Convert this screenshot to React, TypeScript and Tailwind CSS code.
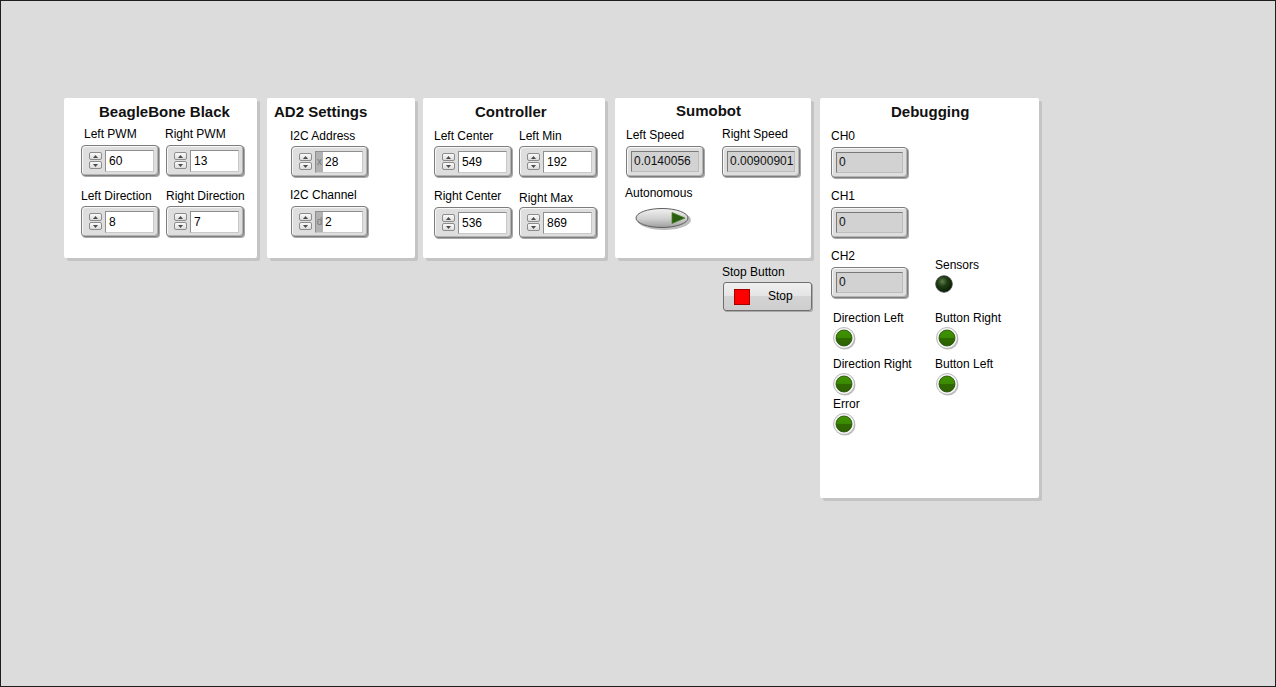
import React from 'react';

// LabVIEW-style front panel: five raised decoration boxes with numeric controls, indicators and LEDs

function Panel({ className, children }: { className: string; children: React.ReactNode }) {
  return (
    <div className={`flex-none bg-white rounded-[2px] shadow-[3px_3px_0_#c4c4c4] ${className}`}>{children}</div>
  );
}

function Title({ className, children }: { className: string; children: React.ReactNode }) {
  return (
    <div className={`text-[15px] leading-[18px] font-bold text-[#111] whitespace-nowrap ${className}`}>{children}</div>
  );
}

function Label({ className = '', children }: { className?: string; children: React.ReactNode }) {
  return <div className={`text-[12px] leading-[15px] whitespace-nowrap ${className}`}>{children}</div>;
}

function Field({
  label,
  labelClass = '',
  bodyClass = '',
  children,
}: {
  label: string;
  labelClass?: string;
  bodyClass?: string;
  children: React.ReactNode;
}) {
  return (
    <div className="flex flex-col items-start">
      <Label className={labelClass}>{label}</Label>
      <div className={bodyClass}>{children}</div>
    </div>
  );
}

function ArrowBtn({ up }: { up?: boolean }) {
  return (
    <div className="w-[13px] h-[8px] rounded-[2px] border border-[#8c8c8c] bg-[linear-gradient(#fafafa,#dcdcdc)] flex items-center justify-center">
      <svg width="5" height="3" viewBox="0 0 5 3">
        {up ? <polygon points="0,3 5,3 2.5,0" fill="#4a4a4a" /> : <polygon points="0,0 5,0 2.5,3" fill="#4a4a4a" />}
      </svg>
    </div>
  );
}

function Numeric({ value, radix, className = 'w-[78px]' }: { value: string; radix?: string; className?: string }) {
  return (
    <div
      className={`flex items-center h-[31px] rounded-[4px] border border-[#7d7d7d] bg-[#dedede] shadow-[inset_1px_1px_0_#f7f7f7,inset_-1px_-1px_0_#b3b3b3,1px_1px_0_#a8a8a8] pl-[7px] pr-[4px] ${className}`}
    >
      <div className="flex flex-col gap-[1px] flex-none">
        <ArrowBtn up />
        <ArrowBtn />
      </div>
      <div className="ml-[3px] flex-1 h-[22px] flex items-stretch bg-white border border-[#8f8f8f] border-r-[#c9c9c9] border-b-[#c9c9c9] overflow-hidden">
        {radix && (
          <span className="w-[7px] flex-none bg-[#b2b2b2] text-[#7a7a7a] text-[10px] leading-[20px] text-center">
            {radix}
          </span>
        )}
        <span className={`${radix ? 'pl-[2px]' : 'pl-[3px]'} text-[12px] leading-[20px]`}>{value}</span>
      </div>
    </div>
  );
}

function Indicator({ value, className = 'w-[78px]' }: { value: string; className?: string }) {
  return (
    <div
      className={`h-[31px] rounded-[4px] border border-[#7d7d7d] bg-[#dedede] shadow-[inset_1px_1px_0_#f7f7f7,inset_-1px_-1px_0_#b3b3b3,1px_1px_0_#a8a8a8] p-[4px] ${className}`}
    >
      <div className="h-full bg-[#d2d2d2] border border-[#7a7a7a] border-r-[#bcbcbc] border-b-[#bcbcbc] pl-[2px] text-[12px] leading-[19px] text-[#111] whitespace-nowrap overflow-hidden">
        {value}
      </div>
    </div>
  );
}

function Led() {
  return (
    <svg width="24" height="24" viewBox="0 0 24 24" className="block">
      <defs>
        <linearGradient id="ledOn" x1="0" y1="0" x2="0" y2="1">
          <stop offset="0" stopColor="#3f9400" />
          <stop offset="0.5" stopColor="#3a8a00" />
          <stop offset="0.5" stopColor="#2f6900" />
          <stop offset="1" stopColor="#2c6200" />
        </linearGradient>
      </defs>
      <circle cx="12" cy="12" r="10.5" fill="#c2c2c2" />
      <circle cx="11" cy="11" r="10.5" fill="#f5f5f5" stroke="#a9a9a9" strokeWidth="0.8" />
      <circle cx="11" cy="11" r="8" fill="url(#ledOn)" stroke="#234d05" strokeWidth="0.8" />
    </svg>
  );
}

function LedOff() {
  return (
    <svg width="18" height="18" viewBox="0 0 18 18" className="block">
      <defs>
        <radialGradient id="ledOff" cx="0.4" cy="0.35" r="0.65">
          <stop offset="0" stopColor="#5f7d4d" />
          <stop offset="0.45" stopColor="#1f3e14" />
          <stop offset="1" stopColor="#0b1c05" />
        </radialGradient>
      </defs>
      <circle cx="9" cy="9" r="8.3" fill="url(#ledOff)" stroke="#3b3b3b" strokeWidth="0.8" />
    </svg>
  );
}

function Toggle() {
  return (
    <svg width="58" height="24" viewBox="0 0 58 24" className="block">
      <defs>
        <linearGradient id="tgl" x1="0" y1="0" x2="0" y2="1">
          <stop offset="0" stopColor="#f2f2f2" />
          <stop offset="0.55" stopColor="#cfcfcf" />
          <stop offset="1" stopColor="#9e9e9e" />
        </linearGradient>
      </defs>
      <ellipse cx="29" cy="13" rx="27" ry="10" fill="#bdbdbd" />
      <ellipse cx="27" cy="11" rx="26" ry="9.5" fill="url(#tgl)" stroke="#5f5f5f" strokeWidth="1" />
      <polygon points="37,5.5 50,11 37,16.5" fill="#2a5c12" stroke="#4a8428" strokeWidth="0.8" />
    </svg>
  );
}

function StopButton() {
  return (
    <div className="w-[89px] h-[29px] rounded-[3px] border border-[#6f6f6f] bg-[linear-gradient(#f0f0f0,#e4e4e4_50%,#d4d4d4_50%,#cecece)] shadow-[1px_1px_0_#a8a8a8] flex items-center pl-[10px]">
      <div className="w-[16px] h-[16px] bg-[#ff0000] border border-[#a30000]" />
      <span className="ml-[18px] text-[12px] leading-[15px]">Stop</span>
    </div>
  );
}

export default function App() {
  return (
    <div className="w-[1276px] h-[687px] overflow-hidden border border-[#1e1e1e] bg-[#dcdcdc] text-black font-['Liberation_Sans',Arial,sans-serif]">
      <div className="flex items-start pt-[97px] pl-[63px]">
        {/* BeagleBone Black */}
        <Panel className="w-[193px] h-[160px] pt-[5px]">
          <Title className="ml-[35px]">BeagleBone Black</Title>
          <div className="mt-[6px] ml-[17px] flex gap-[7px]">
            <Field label="Left PWM" labelClass="ml-[3px]" bodyClass="mt-[3px]">
              <Numeric value="60" />
            </Field>
            <Field label="Right PWM" labelClass="ml-[-1px]" bodyClass="mt-[3px]">
              <Numeric value="13" />
            </Field>
          </div>
          <div className="mt-[13px] ml-[17px] flex gap-[7px]">
            <Field label="Left Direction" bodyClass="mt-[2px]">
              <Numeric value="8" />
            </Field>
            <Field label="Right Direction" bodyClass="mt-[2px]">
              <Numeric value="7" />
            </Field>
          </div>
        </Panel>

        {/* AD2 Settings */}
        <Panel className="ml-[10px] w-[148px] h-[160px] pt-[5px]">
          <Title className="ml-[7px]">AD2 Settings</Title>
          <div className="ml-[24px] flex flex-col">
            <Field label="I2C Address" labelClass="mt-[8px] ml-[-1px]" bodyClass="mt-[2px]">
              <Numeric value="28" radix="x" className="w-[77px]" />
            </Field>
            <Field label="I2C Channel" labelClass="mt-[11px] ml-[-1px]" bodyClass="mt-[3px]">
              <Numeric value="2" radix="d" className="w-[77px]" />
            </Field>
          </div>
        </Panel>

        {/* Controller */}
        <Panel className="ml-[8px] w-[182px] h-[160px] pt-[5px]">
          <Title className="ml-[52px]">Controller</Title>
          <div className="mt-[8px] ml-[11px] flex gap-[7px]">
            <Field label="Left Center" bodyClass="mt-[2px]">
              <Numeric value="549" />
            </Field>
            <Field label="Left Min" bodyClass="mt-[2px]">
              <Numeric value="192" />
            </Field>
          </div>
          <div className="mt-[12px] ml-[11px] flex gap-[7px]">
            <Field label="Right Center" bodyClass="mt-[3px]">
              <Numeric value="536" />
            </Field>
            <Field label="Right Max" labelClass="mt-[2px]" bodyClass="mt-[1px]">
              <Numeric value="869" />
            </Field>
          </div>
        </Panel>

        {/* Sumobot + stop button */}
        <div className="ml-[10px] w-[196px] flex-none flex flex-col items-start">
          <Panel className="w-[196px] h-[160px] pt-[4px]">
            <Title className="ml-[61px]">Sumobot</Title>
            <div className="mt-[7px] ml-[11px] flex gap-[18px]">
              <Field label="Left Speed" labelClass="mt-[1px]" bodyClass="mt-[3px]">
                <Indicator value="0.0140056" />
              </Field>
              <Field label="Right Speed" bodyClass="mt-[4px]">
                <Indicator value="0.00900901" />
              </Field>
            </div>
            <div className="ml-[11px]">
              <Label className="mt-[9px] ml-[-1px]">Autonomous</Label>
              <div className="mt-[6px] ml-[9px]">
                <Toggle />
              </div>
            </div>
          </Panel>
          <Label className="mt-[7px] ml-[107px]">Stop Button</Label>
          <div className="mt-[2px] ml-[108px]">
            <StopButton />
          </div>
        </div>

        {/* Debugging */}
        <Panel className="ml-[9px] w-[219px] h-[400px] pt-[5px]">
          <Title className="ml-[71px]">Debugging</Title>
          <div className="ml-[11px] flex flex-col items-start">
            <Field label="CH0" labelClass="mt-[8px]" bodyClass="mt-[3px]">
              <Indicator value="0" className="w-[77px]" />
            </Field>
            <Field label="CH1" labelClass="mt-[11px]" bodyClass="mt-[3px]">
              <Indicator value="0" className="w-[77px]" />
            </Field>
            <div className="mt-[11px] flex items-start">
              <Field label="CH2" bodyClass="mt-[3px]">
                <Indicator value="0" className="w-[77px]" />
              </Field>
              <Field label="Sensors" labelClass="mt-[9px] ml-[27px]" bodyClass="mt-[2px] ml-[27px]">
                <LedOff />
              </Field>
            </div>
          </div>
          <div className="mt-[13px] ml-[13px] grid grid-cols-[102px_auto]">
            <Field label="Direction Left" bodyClass="mt-[1px]">
              <Led />
            </Field>
            <Field label="Button Right" bodyClass="mt-[1px] ml-[1px]">
              <Led />
            </Field>
            <Field label="Direction Right" labelClass="mt-[6px]" bodyClass="mt-[1px]">
              <Led />
            </Field>
            <Field label="Button Left" labelClass="mt-[6px]" bodyClass="mt-[1px] ml-[1px]">
              <Led />
            </Field>
            <Field label="Error" bodyClass="mt-[1px]">
              <Led />
            </Field>
          </div>
        </Panel>
      </div>
    </div>
  );
}
